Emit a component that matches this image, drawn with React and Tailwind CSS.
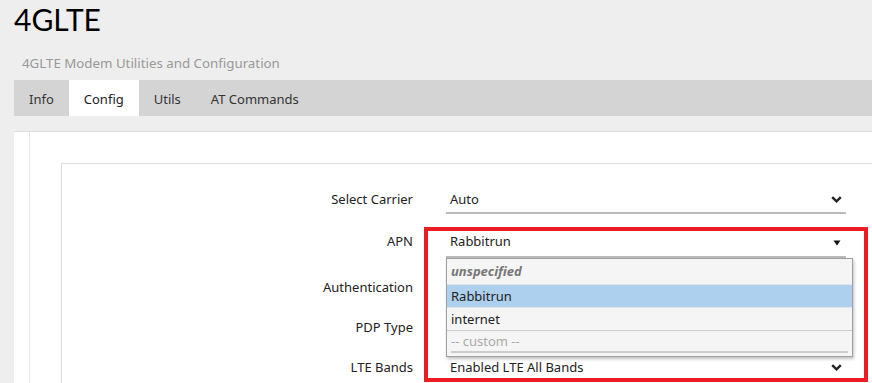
import React from 'react';

const Chevron = () => (
    <svg width="11" height="7" viewBox="0 0 11 7" className="shrink-0">
        <path d="M1.2 1.2 L5.5 5.3 L9.8 1.2" fill="none" stroke="#222" strokeWidth="2.4" />
    </svg>
);

const Triangle = () => (
    <svg width="8" height="6" viewBox="0 0 8 6" className="shrink-0">
        <path d="M0.5 0.5 H7.5 L4 5.5 Z" fill="#111" />
    </svg>
);

function Row({ label, className = '', children }) {
    return (
        <div className={`flex items-start ${className}`}>
            <div className="w-[351px] text-right leading-[26px] text-[13px] text-[#222]">{label}</div>
            <div className="ml-[33px] w-[400px] relative">{children}</div>
        </div>
    );
}

export default function App() {
    const tabs = ['Info', 'Config', 'Utils', 'AT Commands'];
    const options = ['Rabbitrun', 'internet'];

    return (
        <div className="h-screen overflow-hidden bg-[#eeeeee] font-['Noto_Sans',sans-serif] text-[#222]">
            <div className="pl-[14px]">
                <h1 className="font-['Lato','Noto_Sans',sans-serif] text-[30px] leading-[38px] text-black">4GLTE</h1>
                <div className="h-[42px] pt-[15px] pl-2 text-[13.3px] leading-[20px] text-[#999]">
                    4GLTE Modem Utilities and Configuration
                </div>
                <div className="flex h-[36px] bg-[#d4d4d4] text-[13px] text-[#333]">
                    {tabs.map((t) => (
                        <div
                            key={t}
                            className={`px-[15px] pt-[3px] leading-[33px] ${t === 'Config' ? 'bg-white text-[#222]' : ''}`}
                        >
                            {t}
                        </div>
                    ))}
                </div>
            </div>

            <div className="ml-[14px] mt-[15px] bg-white border-t border-[#dddddd] pl-[15px] h-[260px]">
                <div className="border-l border-[#e6e6e6] pl-[31px] pt-[31px] h-full">
                    <div className="relative border-t border-l border-[#dddddd] pt-[22px] h-full">
                        <Row label="Select Carrier">
                            <div className="flex items-start justify-between h-[28px] border-b-2 border-[#bbbbbb] pl-1 pr-1 leading-[26px] text-[13px]">
                                <span>Auto</span>
                                <span className="pt-[10px]"><Chevron /></span>
                            </div>
                        </Row>

                        <Row label="APN" className="mt-[14px] relative z-10">
                            <div className="flex items-start justify-between h-[30px] border-b-2 border-[#bbbbbb] pl-1 pr-[5px] leading-[26px] text-[13px]">
                                <span>Rabbitrun</span>
                                <span className="pt-[12px]"><Triangle /></span>
                            </div>
                            <div className="absolute left-0 top-[30px] w-[407px] h-[99px] bg-[#f5f5f5] border border-[#a0a0a0] shadow-[1px_2px_3px_rgba(0,0,0,0.25)] text-[13px]">
                                <div className="h-[25px] pl-1 leading-[25px] font-bold italic text-[#777]">unspecified</div>
                                {options.map((o) => (
                                    <div
                                        key={o}
                                        className={`h-[23px] pl-1 leading-[23px] border-t border-[#e4e4e4] ${o === 'Rabbitrun' ? 'bg-[#add0ee] border-[#c8dcef]' : ''}`}
                                    >
                                        {o}
                                    </div>
                                ))}
                                <div className="border-t border-[#cccccc] px-1">
                                    <div className="h-[22px] leading-[21px] text-[#aaaaaa] border-b-2 border-[#cccccc]">-- custom --</div>
                                </div>
                            </div>
                        </Row>

                        <Row label="Authentication" className="mt-[16px]">
                            <div className="h-[28px]" />
                        </Row>

                        <Row label="PDP Type" className="mt-[12px]">
                            <div className="h-[28px]" />
                        </Row>

                        <Row label="LTE Bands" className="mt-[12px]">
                            <div className="flex items-start justify-between h-[28px] border-b-2 border-[#bbbbbb] pl-1 pr-1 leading-[26px] text-[13px]">
                                <span>Enabled LTE All Bands</span>
                                <span className="pt-[10px]"><Chevron /></span>
                            </div>
                        </Row>

                        <div className="absolute left-[362px] top-[63px] w-[444px] h-[155px] border-4 border-[#ed1c24] pointer-events-none" />
                    </div>
                </div>
            </div>
        </div>
    );
}
